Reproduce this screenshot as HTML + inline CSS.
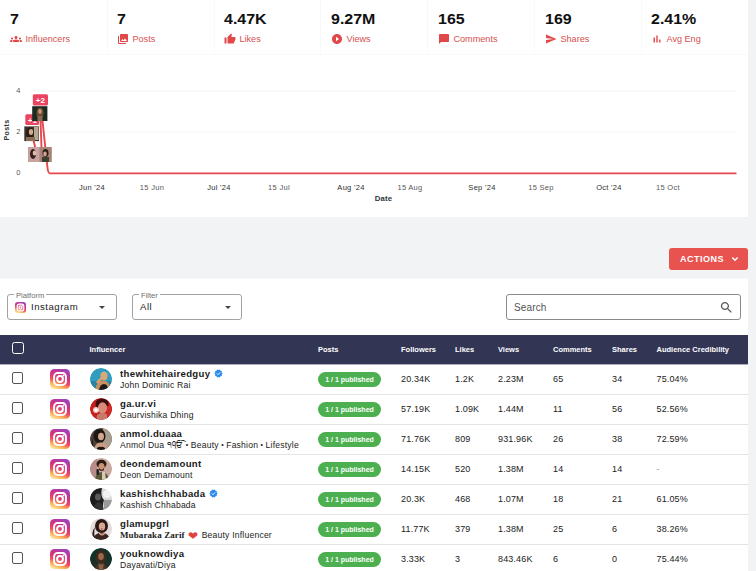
<!DOCTYPE html>
<html><head><meta charset="utf-8">
<style>
*{box-sizing:border-box;margin:0;padding:0}
html,body{width:756px;height:571px;overflow:hidden;background:#f1f3f5;font-family:"Liberation Sans",sans-serif;color:#111}
body{position:relative}
.abs{position:absolute}
.stat{position:absolute;top:0;height:54px}
.stat .n{position:absolute;left:0;top:11px;font-size:14px;line-height:16px;font-weight:bold;color:#111;white-space:nowrap;transform:scaleX(1.14);transform-origin:0 0}
.stat .l{position:absolute;left:0;top:33px;font-size:9.1px;color:#d5504f;white-space:nowrap;display:flex;align-items:center;height:12px}
.stat .l svg{width:12px;height:12px;margin-right:3.5px;fill:#e0484a}
.card1{position:absolute;left:0;top:0;width:748px;height:217px;background:#fff}
.card2{position:absolute;left:0;top:279px;width:748px;height:292px;background:#fff;box-shadow:0 -1px 0 #f8f9fa}
.actions{position:absolute;left:669px;top:248px;width:79px;height:22px;background:#e9534f;border-radius:3px;color:#fff;font-size:9px;font-weight:bold;letter-spacing:.5px;line-height:22px;padding-left:11px}
.sel{position:absolute;top:294px;height:26px;border:1px solid #a2a2a2;border-radius:3px;background:#fff}
.sel .lab{position:absolute;left:6px;top:-3px;font-size:7.6px;color:#6e6e6e;background:#fff;padding:0 2px;line-height:8px}
.sel .val{position:absolute;top:6.4px;font-size:9.600px;letter-spacing:.5px;color:#222;line-height:12px}
.sel .car{position:absolute;right:10px;top:11px;width:0;height:0;border-left:3.800px solid transparent;border-right:3.800px solid transparent;border-top:3.800px solid #444}
.thead{position:absolute;left:0;top:335px;width:748px;height:29px;background:#333555;box-shadow:0 1px 0 rgba(51,53,85,.4)}
.thead span{position:absolute;top:10px;font-size:7.500px;font-weight:bold;color:#fff;line-height:9px;white-space:nowrap}
.row{position:absolute;left:0;width:748px;height:31px;border-bottom:1px solid #e4e4e4;background:transparent}
.row span{position:absolute;white-space:nowrap}
.row .u{left:120px;top:4px;font-size:9.600px;letter-spacing:.33px;font-weight:bold;color:#1a1a1a;line-height:11px}
.row .nm{left:120px;top:16px;font-size:8.600px;letter-spacing:.2px;color:#222;line-height:10px}
.row .d{top:10px;font-size:9px;letter-spacing:.15px;color:#222;line-height:10px}
.row i{font-style:normal;font-size:7px;vertical-align:.6px;margin:0 -.2px}
.row strong{font-family:"Liberation Serif",serif;font-size:9px;letter-spacing:.1px}
.row b{color:#e0413c;font-weight:normal;font-size:11.500px;line-height:8px;vertical-align:-1.500px;margin:0 .8px}
.cb{position:absolute;left:12px;top:8px;width:11px;height:12px;border:1.300px solid #555;border-radius:2px;background:#fff}
.ig{position:absolute;left:50px;top:5px;width:20px;height:20px}
.av{position:absolute;left:90px;top:4px;width:22px;height:22px;border-radius:50%}
.pill{position:absolute;left:318px;top:8px;width:63px;height:15px;border-radius:8px;background:#4caf50;color:#fff;font-size:7px;font-weight:bold;line-height:15px;text-align:center}
</style></head><body>
<div class="card1"></div><div class="abs" style="left:0;top:54px;width:748px;height:1px;background:#f9f9f9"></div><div class="abs" style="left:107px;top:0;width:1px;height:54px;background:#f9f9f9"></div><div class="abs" style="left:214px;top:0;width:1px;height:54px;background:#f9f9f9"></div><div class="abs" style="left:320px;top:0;width:1px;height:54px;background:#f9f9f9"></div><div class="abs" style="left:427px;top:0;width:1px;height:54px;background:#f9f9f9"></div><div class="abs" style="left:534px;top:0;width:1px;height:54px;background:#f9f9f9"></div><div class="abs" style="left:641px;top:0;width:1px;height:54px;background:#f9f9f9"></div><div class="card2"></div>

<div class="stat" style="left:10px"><div class="n">7</div><div class="l"><svg viewBox="0 0 24 24"><path d="M12 12.75c1.63 0 3.07.39 4.24.9 1.08.48 1.76 1.56 1.76 2.73V18H6v-1.61c0-1.18.68-2.26 1.76-2.73 1.17-.52 2.61-.91 4.24-.91zM4 13c1.1 0 2-.9 2-2s-.9-2-2-2-2 .9-2 2 .9 2 2 2zm1.13 1.1c-.37-.06-.74-.1-1.13-.1-.99 0-1.93.21-2.78.58C.48 14.9 0 15.62 0 16.43V18h4.5v-1.61c0-.83.23-1.61.63-2.29zM20 13c1.1 0 2-.9 2-2s-.9-2-2-2-2 .9-2 2 .9 2 2 2zm4 3.43c0-.81-.48-1.53-1.22-1.85-.85-.37-1.79-.58-2.78-.58-.39 0-.76.04-1.13.1.4.68.63 1.46.63 2.29V18H24v-1.57zM12 6c1.66 0 3 1.34 3 3s-1.34 3-3 3-3-1.34-3-3 1.34-3 3-3z"/></svg>Influencers</div></div>
<div class="stat" style="left:117px"><div class="n">7</div><div class="l"><svg viewBox="0 0 24 24"><path d="M22 16V4c0-1.1-.9-2-2-2H8c-1.1 0-2 .9-2 2v12c0 1.1.9 2 2 2h12c1.1 0 2-.9 2-2zm-11-4l2.03 2.71L16 11l4 5H8l3-4zM2 6v14c0 1.1.9 2 2 2h14v-2H4V6H2z"/></svg>Posts</div></div>
<div class="stat" style="left:224px"><div class="n">4.47K</div><div class="l"><svg viewBox="0 0 24 24"><path d="M1 21h4V9H1v12zm22-11c0-1.1-.9-2-2-2h-6.31l.95-4.57.03-.32c0-.41-.17-.79-.44-1.06L14.17 1 7.59 7.59C7.22 7.95 7 8.45 7 9v10c0 1.1.9 2 2 2h9c.83 0 1.54-.5 1.84-1.22l3.02-7.05c.09-.23.14-.47.14-.73v-2z"/></svg>Likes</div></div>
<div class="stat" style="left:331px"><div class="n">9.27M</div><div class="l"><svg viewBox="0 0 24 24"><path d="M12 2C6.48 2 2 6.48 2 12s4.48 10 10 10 10-4.48 10-10S17.52 2 12 2zm-2 14.5v-9l6 4.5-6 4.5z"/></svg>Views</div></div>
<div class="stat" style="left:438px"><div class="n">165</div><div class="l"><svg viewBox="0 0 24 24"><path d="M20 2H4c-1.1 0-2 .9-2 2v18l4-4h14c1.1 0 2-.9 2-2V4c0-1.1-.9-2-2-2z"/></svg>Comments</div></div>
<div class="stat" style="left:545px"><div class="n">169</div><div class="l"><svg viewBox="0 0 24 24"><path d="M2.01 21L23 12 2.01 3 2 10l15 2-15 2z"/></svg>Shares</div></div>
<div class="stat" style="left:651px"><div class="n">2.41%</div><div class="l"><svg viewBox="0 0 24 24"><path d="M5 9.2h3V19H5zM10.6 5h2.8v14h-2.8zm5.6 8H19v6h-2.8z"/></svg>Avg Eng</div></div>

<svg class="abs" style="left:0;top:60px" width="748" height="153" viewBox="0 60 748 153">
<g font-family="Liberation Sans, sans-serif" font-size="7.500" fill="#585858" letter-spacing=".3">
<line x1="30" y1="91" x2="737" y2="91" stroke="#f4f4f4" stroke-width="1"/>
<line x1="30" y1="132" x2="737" y2="132" stroke="#f4f4f4" stroke-width="1"/>
<text x="16.200" y="92.900" letter-spacing="0">4</text><text x="16.200" y="134.200" letter-spacing="0">2</text><text x="16.200" y="174.900" letter-spacing="0">0</text>
<text transform="translate(9.400,140.500) rotate(-90)" font-weight="bold" font-size="7.200" fill="#333">Posts</text>
<text x="92" y="189.800" text-anchor="middle" fill="#2e2e2e">Jun '24</text>
<text x="152" y="189.800" text-anchor="middle">15 Jun</text>
<text x="219" y="189.800" text-anchor="middle" fill="#2e2e2e">Jul '24</text>
<text x="279" y="189.800" text-anchor="middle">15 Jul</text>
<text x="351" y="189.800" text-anchor="middle" fill="#2e2e2e">Aug '24</text>
<text x="410" y="189.800" text-anchor="middle">15 Aug</text>
<text x="482" y="189.800" text-anchor="middle" fill="#2e2e2e">Sep '24</text>
<text x="541" y="189.800" text-anchor="middle">15 Sep</text>
<text x="609" y="189.800" text-anchor="middle" fill="#2e2e2e">Oct '24</text>
<text x="668" y="189.800" text-anchor="middle">15 Oct</text>
<text x="383.500" y="201.200" text-anchor="middle" font-weight="bold" font-size="7.800" letter-spacing=".2" fill="#2f383c">Date</text>
</g>
<path d="M31.600 132 L36.500 153 L41.600 150 L40.200 112 C41.500 116 42.200 120 42.600 122 L47.300 166 C47.800 172 48.500 173.400 50 173.400 L736.500 173.400" fill="none" stroke="#e5484d" stroke-width="1.900" stroke-linejoin="round"/>
<rect x="25.300" y="114.300" width="13.700" height="10.700" rx="1.500" fill="#ea4460"/><text x="32.300" y="122.700" text-anchor="middle" font-family="Liberation Sans, sans-serif" font-size="8" font-weight="bold" fill="#fff">+1</text>
<rect x="32.800" y="94.300" width="15.200" height="11.200" rx="1.500" fill="#ea4460"/>
<text x="40.400" y="102.700" text-anchor="middle" font-family="Liberation Sans, sans-serif" font-size="8" font-weight="bold" fill="#fff">+2</text>
<g><rect x="32.200" y="106.200" width="15.200" height="14.800" fill="#1d2a22"/><ellipse cx="40" cy="113" rx="3.600" ry="5.500" fill="#6b4a32"/><ellipse cx="40" cy="111.500" rx="1.800" ry="2.400" fill="#c49a78"/><rect x="37.500" y="116" width="5" height="5" fill="#8a6a50"/></g>
<g><rect x="24.300" y="126.400" width="14.700" height="14.700" fill="#3e3128"/><ellipse cx="30" cy="133" rx="4" ry="5.500" fill="#2a1c18"/><ellipse cx="31" cy="132" rx="2.200" ry="3" fill="#d0aa8c"/><rect x="34" y="127" width="4.500" height="13" fill="#b9a890"/><rect x="26" y="137" width="9" height="4" fill="#8a7058"/></g>
<g><rect x="28.200" y="147" width="23.300" height="15" fill="#8a6560"/><rect x="28.200" y="147" width="11.600" height="15" fill="#c9a4a0"/><ellipse cx="33" cy="154" rx="3" ry="5" fill="#3a2220"/><ellipse cx="34.500" cy="153" rx="1.800" ry="2.500" fill="#e0bcae"/><rect x="39.800" y="147" width="11.700" height="15" fill="#a88478"/><ellipse cx="45.500" cy="153" rx="3" ry="4" fill="#2c1c18"/><ellipse cx="45" cy="154" rx="1.800" ry="2.400" fill="#d0a48c"/><rect x="42" y="157" width="7" height="5" fill="#3c4030"/></g>
</svg>


<div class="actions">ACTIONS<svg style="position:absolute;left:62px;top:8px" width="8" height="6" viewBox="0 0 8 6"><path d="M1.300 1.500 L4 4.200 L6.700 1.500" fill="none" stroke="#fff" stroke-width="1.500"/></svg></div>

<div class="sel" style="left:7px;width:110px"><div class="lab">Platform</div>
<svg class="abs" style="left:7.200px;top:7px" width="11" height="11" viewBox="0 0 20 20"><defs><linearGradient id="ig" x1="0" y1="1" x2="1" y2="0"><stop offset="0" stop-color="#fdc24f"/><stop offset=".35" stop-color="#f0553c"/><stop offset=".65" stop-color="#d32e8d"/><stop offset="1" stop-color="#8c3ac8"/></linearGradient></defs><rect width="20" height="20" rx="5" fill="url(#ig2)"/><rect x="4" y="4" width="12" height="12" rx="3.500" fill="#fff" fill-opacity=".35" stroke="#fff" stroke-width="2.200"/><circle cx="10" cy="10" r="2.600" fill="none" stroke="#fff" stroke-width="2"/><circle cx="13.800" cy="6.200" r="1" fill="#fff"/></svg>
<div class="val" style="left:23px">Instagram</div><div class="car" style="right:11px"></div></div>
<div class="sel" style="left:132px;width:110px"><div class="lab">Filter</div><div class="val" style="left:7px">All</div><div class="car"></div></div>
<div class="sel" style="left:506px;width:235px;border-color:#8a8a8a"><div class="val" style="left:7px;top:7.400px;color:#555;font-size:10px;letter-spacing:.15px">Search</div>
<svg class="abs" style="left:211.600px;top:5px" width="15" height="15" viewBox="0 0 24 24"><path fill="#555" d="M15.500 14h-.79l-.28-.27C15.410 12.590 16 11.110 16 9.500 16 5.910 13.090 3 9.500 3S3 5.910 3 9.500 5.910 16 9.500 16c1.610 0 3.090-.59 4.230-1.570l.27.28v.79l5 4.990L20.490 19l-4.990-5zm-6 0C7.010 14 5 11.990 5 9.500S7.010 5 9.500 5 14 7.010 14 9.500 11.990 14 9.500 14z"/></svg></div>

<div class="thead">
<div class="abs" style="left:12px;top:7px;width:12px;height:12px;border:1.800px solid #fff;border-radius:2.500px"></div>
<span style="left:89.500px">Influencer</span><span style="left:318px">Posts</span><span style="left:401px">Followers</span><span style="left:455px">Likes</span><span style="left:498px">Views</span><span style="left:553px">Comments</span><span style="left:612px">Shares</span><span style="left:656.500px">Audience Credibility</span>
</div>
<div id="rows">
<svg width="0" height="0" style="position:absolute"><defs><linearGradient id="ig2" x1="0.3" y1="1" x2="0.7" y2="0"><stop offset="0" stop-color="#fde09a"/><stop offset=".18" stop-color="#fbb058"/><stop offset=".38" stop-color="#ef4d5c"/><stop offset=".62" stop-color="#d4317f"/><stop offset="1" stop-color="#9d42bd"/></linearGradient><clipPath id="cc"><circle cx="11" cy="11" r="11"/></clipPath></defs></svg>
<div class="row" style="top:364px"><div class="cb"></div><svg class="ig" viewBox="0 0 20 20"><rect width="20" height="20" rx="4.500" fill="url(#ig2)"/><rect x="4.100" y="4.100" width="11.800" height="11.800" rx="3.400" fill="none" stroke="#fff" stroke-width="2"/><circle cx="10" cy="10" r="2.900" fill="none" stroke="#fff" stroke-width="2"/><circle cx="13.500" cy="6.500" r=".95" fill="#fff"/></svg><svg class="av" viewBox="0 0 22 22"><g clip-path="url(#cc)"><rect width="22" height="22" fill="#2f9dbd"/><rect y="13" width="22" height="9" fill="#2a86a0"/><ellipse cx="14" cy="8" rx="3.600" ry="4.200" fill="#d9a878"/><path d="M10.500 6 Q14 1 17.500 6 Q15 4 10.500 6z" fill="#c8b090"/><path d="M5 22 Q7 12 14 12.500 Q20 13 20 22z" fill="#c98f5e"/><path d="M9 22 Q10 16 14 16 Q18 16 18 22z" fill="#1c1a1a"/><path d="M6 14 L11 9 L12 11 L8 16z" fill="#d9a070"/></g></svg><span class="u">thewhitehairedguy<svg style="display:inline-block;vertical-align:-1px;margin-left:3.500px" width="9" height="9" viewBox="0 0 24 24"><path fill="#2d8bea" d="M23 12l-2.440-2.790.34-3.690-3.610-.82-1.890-3.200L12 2.960 8.600 1.500 6.710 4.690 3.100 5.500l.34 3.700L1 12l2.440 2.790-.34 3.700 3.610.82L8.600 22.500l3.400-1.470 3.400 1.460 1.890-3.190 3.610-.82-.34-3.690L23 12z"/><path fill="none" stroke="#fff" stroke-width="2.400" d="M7.500 12.200l3 3 6-6.200"/></svg></span><span class="nm">John Dominic Rai</span><div class="pill">1 / 1 published</div><span class="d" style="left:401px">20.34K</span><span class="d" style="left:455px">1.2K</span><span class="d" style="left:498px">2.23M</span><span class="d" style="left:553px">65</span><span class="d" style="left:612px">34</span><span class="d" style="left:656.500px">75.04%</span></div>
<div class="row" style="top:394px"><div class="cb"></div><svg class="ig" viewBox="0 0 20 20"><rect width="20" height="20" rx="4.500" fill="url(#ig2)"/><rect x="4.100" y="4.100" width="11.800" height="11.800" rx="3.400" fill="none" stroke="#fff" stroke-width="2"/><circle cx="10" cy="10" r="2.900" fill="none" stroke="#fff" stroke-width="2"/><circle cx="13.500" cy="6.500" r=".95" fill="#fff"/></svg><svg class="av" viewBox="0 0 22 22"><g clip-path="url(#cc)"><rect width="22" height="22" fill="#c3201f"/><ellipse cx="12" cy="6" rx="6.500" ry="5.500" fill="#3a0c0c"/><ellipse cx="12.500" cy="10" rx="4.600" ry="5.800" fill="#d88a78"/><ellipse cx="12.500" cy="19" rx="6" ry="4" fill="#c77a6a"/><circle cx="6" cy="12" r="3" fill="#f3d6d0" opacity=".9"/><circle cx="6" cy="12" r="1.600" fill="#fff"/><rect x="17" y="8" width="5" height="14" fill="#d02a28"/></g></svg><span class="u">ga.ur.vi</span><span class="nm">Gaurvishika Dhing</span><div class="pill">1 / 1 published</div><span class="d" style="left:401px">57.19K</span><span class="d" style="left:455px">1.09K</span><span class="d" style="left:498px">1.44M</span><span class="d" style="left:553px">11</span><span class="d" style="left:612px">56</span><span class="d" style="left:656.500px">52.56%</span></div>
<div class="row" style="top:424px"><div class="cb"></div><svg class="ig" viewBox="0 0 20 20"><rect width="20" height="20" rx="4.500" fill="url(#ig2)"/><rect x="4.100" y="4.100" width="11.800" height="11.800" rx="3.400" fill="none" stroke="#fff" stroke-width="2"/><circle cx="10" cy="10" r="2.900" fill="none" stroke="#fff" stroke-width="2"/><circle cx="13.500" cy="6.500" r=".95" fill="#fff"/></svg><svg class="av" viewBox="0 0 22 22"><g clip-path="url(#cc)"><rect width="22" height="22" fill="#4a4038"/><rect x="13" width="9" height="22" fill="#a89c8c"/><ellipse cx="9.500" cy="8" rx="6" ry="7" fill="#1c1614"/><ellipse cx="11" cy="8.500" rx="3" ry="3.800" fill="#d2a68c"/><path d="M4 22 Q5 14 11 14.500 Q17 14 18 22z" fill="#c99c84"/><path d="M6 22 Q8 17.500 11 19 Q14 17.500 16 22z" fill="#181414"/><path d="M3 10 Q2 18 5 22 L3 22 Q0 16 3 10z" fill="#1c1614"/></g></svg><span class="u">anmol.duaaa</span><span class="nm">Anmol Dua ੧ੴ <i>•</i> Beauty <i>•</i> Fashion <i>•</i> Lifestyle</span><div class="pill">1 / 1 published</div><span class="d" style="left:401px">71.76K</span><span class="d" style="left:455px">809</span><span class="d" style="left:498px">931.96K</span><span class="d" style="left:553px">26</span><span class="d" style="left:612px">38</span><span class="d" style="left:656.500px">72.59%</span></div>
<div class="row" style="top:454px"><div class="cb"></div><svg class="ig" viewBox="0 0 20 20"><rect width="20" height="20" rx="4.500" fill="url(#ig2)"/><rect x="4.100" y="4.100" width="11.800" height="11.800" rx="3.400" fill="none" stroke="#fff" stroke-width="2"/><circle cx="10" cy="10" r="2.900" fill="none" stroke="#fff" stroke-width="2"/><circle cx="13.500" cy="6.500" r=".95" fill="#fff"/></svg><svg class="av" viewBox="0 0 22 22"><g clip-path="url(#cc)"><rect width="22" height="22" fill="#c9a8a0"/><rect width="7" height="22" fill="#b88c88"/><ellipse cx="11.500" cy="6" rx="5" ry="4.200" fill="#2a1a14"/><ellipse cx="11.500" cy="8.500" rx="3" ry="3.600" fill="#c99474"/><path d="M9 10 Q11.500 13.500 14 10 L14 12 Q11.500 14 9 12z" fill="#3a2418"/><path d="M5 22 Q6 14 11.500 14 Q18 14 19 22z" fill="#5a5a38"/><rect x="6.500" y="11" width="2.400" height="6" rx="1" fill="#1a1a1a"/><path d="M12 14 L15 14 L16 22 L12 22z" fill="#d8c8b8"/></g></svg><span class="u">deondemamount</span><span class="nm">Deon Demamount</span><div class="pill">1 / 1 published</div><span class="d" style="left:401px">14.15K</span><span class="d" style="left:455px">520</span><span class="d" style="left:498px">1.38M</span><span class="d" style="left:553px">14</span><span class="d" style="left:612px">14</span><span class="d" style="left:656.500px;color:#999">-</span></div>
<div class="row" style="top:484px"><div class="cb"></div><svg class="ig" viewBox="0 0 20 20"><rect width="20" height="20" rx="4.500" fill="url(#ig2)"/><rect x="4.100" y="4.100" width="11.800" height="11.800" rx="3.400" fill="none" stroke="#fff" stroke-width="2"/><circle cx="10" cy="10" r="2.900" fill="none" stroke="#fff" stroke-width="2"/><circle cx="13.500" cy="6.500" r=".95" fill="#fff"/></svg><svg class="av" viewBox="0 0 22 22"><g clip-path="url(#cc)"><rect width="22" height="22" fill="#d8d8d8"/><path d="M0 0 H12 Q10 8 14 12 Q12 18 14 22 H0z" fill="#1e1e1e"/><ellipse cx="8" cy="9" rx="3" ry="3.600" fill="#5a5a5a"/><rect x="14" y="12" width="8" height="10" fill="#9a9a9a"/><ellipse cx="17" cy="6" rx="4" ry="4" fill="#f2f2f2"/><path d="M3 22 Q5 14 9 14 Q13 15 13 22z" fill="#333"/></g></svg><span class="u">kashishchhabada<svg style="display:inline-block;vertical-align:-1px;margin-left:3.500px" width="9" height="9" viewBox="0 0 24 24"><path fill="#2d8bea" d="M23 12l-2.440-2.790.34-3.690-3.610-.82-1.890-3.200L12 2.960 8.600 1.500 6.710 4.690 3.100 5.500l.34 3.700L1 12l2.440 2.790-.34 3.700 3.610.82L8.600 22.500l3.400-1.470 3.400 1.460 1.890-3.190 3.610-.82-.34-3.690L23 12z"/><path fill="none" stroke="#fff" stroke-width="2.400" d="M7.500 12.200l3 3 6-6.200"/></svg></span><span class="nm">Kashish Chhabada</span><div class="pill">1 / 1 published</div><span class="d" style="left:401px">20.3K</span><span class="d" style="left:455px">468</span><span class="d" style="left:498px">1.07M</span><span class="d" style="left:553px">18</span><span class="d" style="left:612px">21</span><span class="d" style="left:656.500px">61.05%</span></div>
<div class="row" style="top:514px"><div class="cb"></div><svg class="ig" viewBox="0 0 20 20"><rect width="20" height="20" rx="4.500" fill="url(#ig2)"/><rect x="4.100" y="4.100" width="11.800" height="11.800" rx="3.400" fill="none" stroke="#fff" stroke-width="2"/><circle cx="10" cy="10" r="2.900" fill="none" stroke="#fff" stroke-width="2"/><circle cx="13.500" cy="6.500" r=".95" fill="#fff"/></svg><svg class="av" viewBox="0 0 22 22"><g clip-path="url(#cc)"><rect width="22" height="22" fill="#e6dcdc"/><ellipse cx="11.500" cy="8" rx="6.500" ry="7" fill="#2a1814"/><ellipse cx="12" cy="8.500" rx="3.200" ry="4" fill="#d8a890"/><path d="M3 22 Q4 15 11.500 14.500 Q19 15 20 22z" fill="#3a2420"/><path d="M9 14 Q12 17 15 14 L15 16 Q12 19 9 16z" fill="#cf9c84"/><path d="M5 9 Q3 16 6 22 L3 22 Q1 14 5 9z" fill="#2a1814"/><circle cx="11.800" cy="11" r=".8" fill="#b03040"/></g></svg><span class="u">glamupgrl</span><span class="nm"><strong>Mubaraka Zarif</strong> <b>&#10084;</b> Beauty Influencer</span><div class="pill">1 / 1 published</div><span class="d" style="left:401px">11.77K</span><span class="d" style="left:455px">379</span><span class="d" style="left:498px">1.38M</span><span class="d" style="left:553px">25</span><span class="d" style="left:612px">6</span><span class="d" style="left:656.500px">38.26%</span></div>
<div class="row" style="top:544px"><div class="cb"></div><svg class="ig" viewBox="0 0 20 20"><rect width="20" height="20" rx="4.500" fill="url(#ig2)"/><rect x="4.100" y="4.100" width="11.800" height="11.800" rx="3.400" fill="none" stroke="#fff" stroke-width="2"/><circle cx="10" cy="10" r="2.900" fill="none" stroke="#fff" stroke-width="2"/><circle cx="13.500" cy="6.500" r=".95" fill="#fff"/></svg><svg class="av" viewBox="0 0 22 22"><g clip-path="url(#cc)"><rect width="22" height="22" fill="#12332a"/><ellipse cx="11" cy="9" rx="5.200" ry="7" fill="#3c2a1c"/><ellipse cx="11" cy="8.500" rx="2.800" ry="3.600" fill="#9a6a4c"/><path d="M5 22 Q6 15 11 15 Q16 15 17 22z" fill="#4a3624"/><path d="M8.500 15 Q11 18 13.500 15 L13 22 L9 22z" fill="#8a6044"/><path d="M6 8 Q4 16 7 22 L5 22 Q3 14 6 8z M16 8 Q18 16 15 22 L17 22 Q19 14 16 8z" fill="#3c2a1c"/></g></svg><span class="u">youknowdiya</span><span class="nm">Dayavati/Diya</span><div class="pill">1 / 1 published</div><span class="d" style="left:401px">3.33K</span><span class="d" style="left:455px">3</span><span class="d" style="left:498px">843.46K</span><span class="d" style="left:553px">6</span><span class="d" style="left:612px">0</span><span class="d" style="left:656.500px">75.44%</span></div>
</div>
</body></html>
